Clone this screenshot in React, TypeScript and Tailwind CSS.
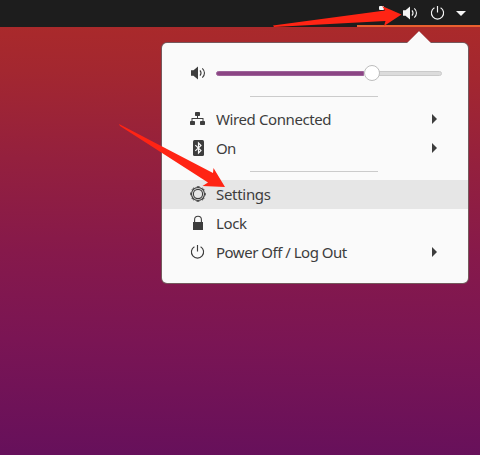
import type { ReactNode } from "react";

function VolumeIcon() {
  return (
    <svg className="block h-4 w-4" viewBox="0 0 16 16" fill="none" stroke="currentColor">
      <path d="M1 5.2h2.5L8 1.5v13L3.5 10.8H1z" fill="currentColor" stroke="none" />
      <path d="M10 5.4c1.3 1.6 1.3 3.6 0 5.2" strokeWidth="1.1" />
      <path d="M12.3 3.3c2.9 2.8 2.9 6.6 0 9.4" strokeWidth="1.1" />
    </svg>
  );
}

function PowerIcon() {
  return (
    <svg className="block h-4 w-4" viewBox="0 0 16 16" fill="none" stroke="currentColor" strokeWidth="1.15">
      <path d="M7.5 1v6.5M4.4 2.7a6.1 6.1 0 1 0 6.2 0" />
    </svg>
  );
}

function NetworkIcon() {
  return (
    <svg className="block h-4 w-4" viewBox="0 0 16 16" fill="currentColor">
      <rect x="5" y="1" width="5" height="4" rx=".8" />
      <rect x="0" y="10" width="5" height="4" rx=".8" />
      <rect x="10" y="10" width="5" height="4" rx=".8" />
      <path d="M7 4h1v3h5.5v4h-1V8h-10v3h-1V7H7z" />
    </svg>
  );
}

function BluetoothIcon() {
  return (
    <svg className="block h-4 w-4" viewBox="0 0 16 16">
      <rect x="3" y="0" width="11" height="16" rx="1.5" fill="currentColor" />
      <path d="M5.3 5.2 11 10.5 8.5 13V3L11 5.5 5.3 10.8" fill="none" stroke="#fafafa" strokeWidth="1.15" />
    </svg>
  );
}

function GearIcon() {
  return (
    <svg className="block h-4 w-4 overflow-visible" viewBox="0 0 16 16" fill="none" stroke="currentColor">
      <circle cx="8" cy="8" r="6.5" strokeWidth="1.1" />
      <circle cx="8" cy="8" r="7.4" strokeWidth="1" strokeDasharray="2.9 2.912" strokeDashoffset="1.45" />
      <circle cx="8" cy="8" r="4.6" strokeWidth="1.1" />
    </svg>
  );
}

function LockIcon() {
  return (
    <svg className="block h-4 w-4" viewBox="0 0 16 16">
      <rect x="3" y="7" width="10" height="8" fill="currentColor" />
      <path d="M4.6 7.5V4.7a3.4 3.4 0 0 1 6.8 0v2.8" fill="none" stroke="currentColor" strokeWidth="1.1" />
    </svg>
  );
}

type MenuItemProps = {
  icon: ReactNode;
  label: string;
  tracking: string;
  submenu?: boolean;
  selected?: boolean;
};

function MenuItem({ icon, label, tracking, submenu, selected }: MenuItemProps) {
  return (
    <div className={`flex h-[29px] items-center pr-[31px] pl-7 ${selected ? "bg-[#e6e6e6]" : ""}`}>
      <span className="-mt-px w-[26px]">{icon}</span>
      <span className={`grow whitespace-nowrap text-[15px] leading-[29px] ${tracking}`}>{label}</span>
      {submenu && (
        <svg className="-mt-px h-[10px] w-[5px]" viewBox="0 0 5 10">
          <path d="M0 0l5 5-5 5z" fill="currentColor" />
        </svg>
      )}
    </div>
  );
}

function Separator() {
  return (
    <div className="flex h-[17px] pt-2 pl-[88px]">
      <div className="h-px w-32 bg-[#cbcbcb]" />
    </div>
  );
}

export default function App() {
  return (
    <main className="relative h-[455px] w-[480px] overflow-hidden bg-[linear-gradient(181deg,#ab2a2a_5%,#a32730_17%,#94203e_36%,#86194b_56%,#7a1554_75%,#66105b_100%)] font-['Noto_Sans','Open_Sans',sans-serif] text-[#3d3d3d]">
      <header className="flex h-[27px] justify-end bg-[#1d1d1d] text-[#f4f4f4]">
        <div className="flex w-[123px] items-center border-b-2 border-[#e9602f] pl-[22px]">
          <span className="mb-[9px] h-1 w-[5px] rounded-[1px] bg-current" />
          <span className="ml-[18px]"><VolumeIcon /></span>
          <span className="ml-[12px]"><PowerIcon /></span>
          <svg className="mt-[2px] ml-[10px] h-[5px] w-[10px]" viewBox="0 0 10 5">
            <path d="M0 0h10L5 5z" fill="currentColor" />
          </svg>
        </div>
      </header>

      <section className="relative mt-4 ml-[162px] h-60 w-[306px] rounded-[5px] bg-[#fafafa] pt-4 shadow-[0_0_0_1px_#75585c]">
        <svg className="absolute -top-3 left-[245px] h-[13px] w-6" viewBox="0 0 24 13">
          <path d="M0 12 12 0l12 12v1H0z" fill="#fafafa" />
          <path d="M0 11.5 12 0l12 11.5" fill="none" stroke="#9b5559" strokeWidth=".35" />
        </svg>
        <div className="flex h-[29px] items-center pb-px pl-7">
          <span className="-mt-px w-[26px]"><VolumeIcon /></span>
          <div className="flex w-[226px] items-center">
            <div className="h-[5px] w-[148px] rounded-l-full border border-[#9d6299] bg-[#8b4584]" />
            <div className="z-10 -mr-2 h-4 w-4 rounded-full border border-[#bdbdbd] bg-white" />
            <div className="h-[5px] grow rounded-r-full border border-[#cacaca] bg-[#dcdcdc]" />
          </div>
        </div>
        <Separator />
        <MenuItem icon={<NetworkIcon />} label="Wired Connected" tracking="tracking-[-0.4px]" submenu />
        <MenuItem icon={<BluetoothIcon />} label="On" tracking="tracking-[-0.7px]" submenu />
        <Separator />
        <MenuItem icon={<GearIcon />} label="Settings" tracking="tracking-[-0.3px]" selected />
        <MenuItem icon={<LockIcon />} label="Lock" tracking="tracking-[-0.4px]" />
        <MenuItem icon={<PowerIcon />} label="Power Off / Log Out" tracking="tracking-[-0.49px]" submenu />
      </section>

      <svg className="pointer-events-none absolute inset-0 h-[455px] w-[480px]" viewBox="0 0 480 455" fill="#ff2414">
        <path d="M273 25.5 385 10.5 382 6 401.5 14.5 384 26 385.5 21 274 27z" />
        <path d="M119 124 213 173 213.5 168 225 187 202.5 186 208 182.5 120 126z" />
      </svg>
    </main>
  );
}
